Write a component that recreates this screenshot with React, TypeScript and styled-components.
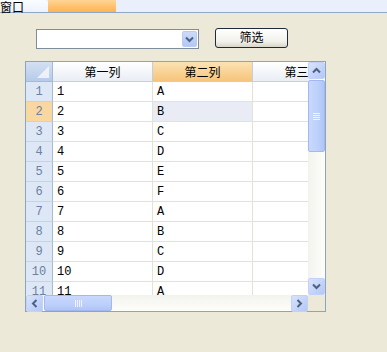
import styled, { createGlobalStyle } from 'styled-components';

const GlobalStyle = createGlobalStyle`
  html, body {
    margin: 0;
    padding: 0;
    background: #ece9d8;
  }
  body {
    font-family: "Noto Sans CJK SC", "DejaVu Sans", sans-serif;
  }
`;

const Page = styled.div`
  width: 387px;
  height: 352px;
  background: #ece9d8;
  overflow: hidden;
`;

const TabBar = styled.div`
  display: flex;
  height: 12px;
  background: #eaf0fb;
  border-bottom: 1px solid #8ea7c6;
`;

const Tab = styled.div<{ $active?: boolean }>`
  width: ${(p) => (p.$active ? 68 : 48)}px;
  height: 12px;
  font-size: 12px;
  line-height: 13px;
  color: #000;
  white-space: nowrap;
  background: ${(p) =>
    p.$active
      ? 'linear-gradient(#ffd595, #ffb24f)'
      : 'linear-gradient(#fbfcfe, #edf2fb)'};
  border-top-right-radius: ${(p) => (p.$active ? 0 : 4)}px;
`;

const Toolbar = styled.div`
  display: flex;
  align-items: flex-start;
  padding: 15px 0 0 36px;
  height: 21px;
`;

const Combo = styled.div`
  width: 160px;
  height: 18px;
  margin-top: 1px;
  background: #fff;
  border: 1px solid #7f8c99;
  display: flex;
  justify-content: flex-end;
  align-items: center;
  padding-right: 1px;
`;

const ComboButton = styled.div`
  width: 13px;
  height: 14px;
  border-radius: 2px;
  background: linear-gradient(#cddaf9, #b4c8f6);
  border: 1px solid #b9cbf5;
  display: flex;
  align-items: center;
  justify-content: center;
`;

const FilterButton = styled.button`
  margin-left: 16px;
  width: 73px;
  height: 20px;
  padding: 0 0 2px;
  border: 1px solid #1c2a3b;
  border-radius: 3px;
  background: linear-gradient(#ffffff, #f2f1ea 70%, #d8d5c8);
  font-family: "Noto Sans CJK SC", sans-serif;
  font-size: 12px;
  color: #000;
  line-height: 16px;
`;

const Grid = styled.div`
  margin: 12px 0 0 25px;
  width: 299px;
  height: 249px;
  border: 1px solid #8da4bf;
  display: grid;
  grid-template-columns: 1fr 17px;
  grid-template-rows: 1fr 16px;
  background: #fff;
`;

const Viewport = styled.div`
  overflow: hidden;
`;

const Row = styled.div`
  display: flex;
  height: 20px;
`;

const CornerCell = styled.div`
  width: 26px;
  flex: none;
  height: 19px;
  border-right: 1px solid #a8bad2;
  border-bottom: 1px solid #a8bad2;
  background: linear-gradient(#d3e0f3, #b6cbea);
  position: relative;
`;

const HeaderCell = styled.div<{ $selected?: boolean }>`
  width: 99px;
  flex: none;
  height: 19px;
  border-right: 1px solid #c5cedb;
  border-bottom: 1px solid #c9cfd8;
  background: ${(p) =>
    p.$selected
      ? 'linear-gradient(#fbe2b4, #f6c57a)'
      : 'linear-gradient(#ffffff, #e9edf4)'};
  display: flex;
  justify-content: center;
  align-items: center;
  font-size: 12px;
  color: #000;
  white-space: nowrap;
  overflow: hidden;
`;

const RowHeader = styled.div<{ $selected?: boolean }>`
  width: 26px;
  flex: none;
  height: 19px;
  border-right: 1px solid #a9bbd3;
  border-bottom: 1px solid #c6d3e6;
  background: ${(p) => (p.$selected ? '#f9d7a0' : '#dde7f5')};
  color: #6f7f9e;
  font-family: "Liberation Mono", "DejaVu Sans Mono", monospace;
  font-size: 12px;
  display: flex;
  align-items: center;
  justify-content: center;
`;

const Cell = styled.div<{ $selected?: boolean }>`
  width: 100px;
  flex: none;
  height: 19px;
  box-sizing: border-box;
  border-right: 1px solid #e4e2d6;
  background: ${(p) => (p.$selected ? '#e9ecf5' : '#fff')};
  box-shadow: inset 0 -1px 0 #e4e2d6;
  height: 20px;
  font-family: "Liberation Mono", "DejaVu Sans Mono", monospace;
  font-size: 12px;
  color: #000;
  display: flex;
  align-items: center;
  padding-left: 4px;
`;

const VScroll = styled.div`
  display: flex;
  flex-direction: column;
  background: linear-gradient(90deg, #f3f3ee, #fdfdfb);
`;

const HScroll = styled.div`
  display: flex;
  align-items: center;
  background: linear-gradient(#f3f3ee, #fdfdfb);
`;

const ScrollCorner = styled.div`
  background: #ece9d8;
`;

const ArrowButton = styled.div`
  width: 15px;
  height: 15px;
  flex: none;
  border: 1px solid #c3d1f6;
  border-radius: 2px;
  background: linear-gradient(135deg, #d8e3fc, #b4c7f5);
  display: flex;
  align-items: center;
  justify-content: center;
`;

const VThumb = styled.div`
  margin-top: 1px;
  height: 70px;
  width: 15px;
  border: 1px solid #a3b8ef;
  border-radius: 2px;
  background: linear-gradient(90deg, #c9d8fc, #bdd0fb 60%, #b0c5f7);
  display: flex;
  align-items: center;
  justify-content: center;
`;

const HThumb = styled.div`
  margin-left: 1px;
  width: 66px;
  height: 14px;
  border: 1px solid #a3b8ef;
  border-radius: 2px;
  background: linear-gradient(#c9d8fc, #bdd0fb 60%, #b0c5f7);
  display: flex;
  align-items: center;
  justify-content: center;
`;

const Spacer = styled.div`
  flex: 1;
`;

const Chevron = ({ dir }: { dir: 'up' | 'down' | 'left' | 'right' }) => {
  const rot = { up: 180, down: 0, left: 90, right: -90 }[dir];
  return (
    <svg width="9" height="9" viewBox="0 0 9 9" style={{ transform: `rotate(${rot}deg)` }}>
      <path d="M1 2.5 L4.5 6 L8 2.5" fill="none" stroke="#4d6185" strokeWidth="2" />
    </svg>
  );
};

const GripV = () => (
  <svg width="7" height="7" viewBox="0 0 7 7">
    {[0, 2, 4, 6].map((y) => (
      <line key={y} x1="0" x2="7" y1={y + 0.5} y2={y + 0.5} stroke="#eef3fe" />
    ))}
  </svg>
);

const GripH = () => (
  <svg width="7" height="7" viewBox="0 0 7 7">
    {[0, 2, 4, 6].map((x) => (
      <line key={x} y1="0" y2="7" x1={x + 0.5} x2={x + 0.5} stroke="#eef3fe" />
    ))}
  </svg>
);

const letters = ['A', 'B', 'C', 'D', 'E', 'F', 'A', 'B', 'C', 'D', 'A'];

export default function App() {
  return (
    <Page>
      <GlobalStyle />
      <TabBar>
        <Tab>窗口</Tab>
        <Tab $active />
      </TabBar>
      <Toolbar>
        <Combo>
          <ComboButton>
            <Chevron dir="down" />
          </ComboButton>
        </Combo>
        <FilterButton>筛选</FilterButton>
      </Toolbar>
      <Grid>
        <Viewport>
          <Row>
            <CornerCell>
              <svg width="12" height="12" viewBox="0 0 12 12" style={{ position: 'absolute', right: 3, bottom: 3 }}>
                <path d="M12 0 L12 12 L0 12 Z" fill="#f4f7fc" opacity="0.85" />
              </svg>
            </CornerCell>
            <HeaderCell>第一列</HeaderCell>
            <HeaderCell $selected>第二列</HeaderCell>
            <HeaderCell>第三列</HeaderCell>
          </Row>
          {letters.map((l, i) => (
            <Row key={i}>
              <RowHeader $selected={i === 1}>{i + 1}</RowHeader>
              <Cell>{i + 1}</Cell>
              <Cell $selected={i === 1}>{l}</Cell>
              <Cell />
            </Row>
          ))}
        </Viewport>
        <VScroll>
          <ArrowButton>
            <Chevron dir="up" />
          </ArrowButton>
          <VThumb>
            <GripV />
          </VThumb>
          <Spacer />
          <ArrowButton>
            <Chevron dir="down" />
          </ArrowButton>
        </VScroll>
        <HScroll>
          <ArrowButton>
            <Chevron dir="left" />
          </ArrowButton>
          <HThumb>
            <GripH />
          </HThumb>
          <Spacer />
          <ArrowButton>
            <Chevron dir="right" />
          </ArrowButton>
        </HScroll>
        <ScrollCorner />
      </Grid>
    </Page>
  );
}
